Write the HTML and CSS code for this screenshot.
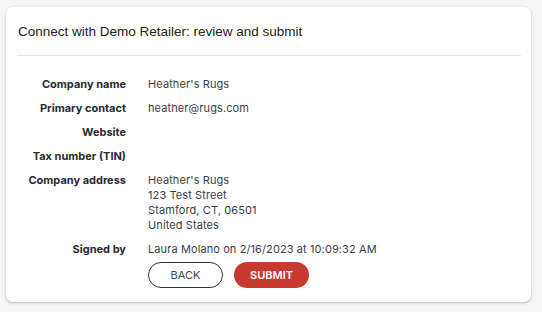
FILE: index.html
```html
<!DOCTYPE html>
<html lang="en">
<head>
    <meta charset="UTF-8">
    <meta name="viewport" content="width=device-width, initial-scale=1.0">
    <title>Review and submit</title>
    <link rel="stylesheet" href="styles.css">
</head>
<body>
    <div class="card">
        <h1 class="card-title">Connect with Demo Retailer: review and submit</h1>

        <dl class="summary">
            <dt>Company name</dt>
            <dd>Heather's Rugs</dd>

            <dt>Primary contact</dt>
            <dd>heather@rugs.com</dd>

            <dt>Website</dt>
            <dd></dd>

            <dt>Tax number (TIN)</dt>
            <dd></dd>

            <dt>Company address</dt>
            <dd>
                Heather's Rugs<br>
                123 Test Street<br>
                Stamford, CT, 06501<br>
                United States
            </dd>

            <dt>Signed by</dt>
            <dd>
                Laura Molano on 2/16/2023 at 10:09:32 AM
                <div class="actions">
                    <button type="button" class="btn btn-outline">BACK</button>
                    <button type="submit" class="btn btn-primary">SUBMIT</button>
                </div>
            </dd>
        </dl>
    </div>
</body>
</html>
```

FILE: styles.css
```css
body {
    margin: 0;
    padding: 7px 11px 10px 6px;
    background-color: #f5f5f5;
    font-family: Inter, "Noto Sans", sans-serif;
}
.card {
    background-color: #fff;
    border-radius: 7px;
    box-shadow: 0 1px 3px rgba(0, 0, 0, 0.25);
    padding: 0 10px 14px 11px;
}
.card-title {
    margin: 0;
    padding: 17px 1px 16px;
    border-bottom: 1px solid #e6e6e6;
    font-family: "Liberation Sans", Arial, sans-serif;
    font-size: 13.5px;
    font-weight: normal;
    color: #222;
}
.summary {
    display: grid;
    grid-template-columns: 109px 1fr;
    column-gap: 22px;
    row-gap: 9px;
    margin: 21px 0 0;
    font-size: 11px;
    line-height: 15px;
}
.summary dt {
    text-align: right;
    font-weight: 700;
    color: #2a2a35;
}
.summary dd {
    margin: 0;
    min-height: 15px;
    color: #3d3d4a;
    letter-spacing: 0.1px;
}
.actions {
    display: flex;
    gap: 11px;
    margin-top: 5px;
}
.btn {
    width: 75px;
    height: 26px;
    border-radius: 13px;
    font-family: Inter, "Noto Sans", sans-serif;
    font-size: 11px;
    cursor: pointer;
}
.btn-outline {
    background-color: #fff;
    border: 1px solid #333;
    color: #444;
}
.btn-primary {
    background-color: #c83a30;
    border: none;
    color: #fff;
    font-weight: 600;
}
```
